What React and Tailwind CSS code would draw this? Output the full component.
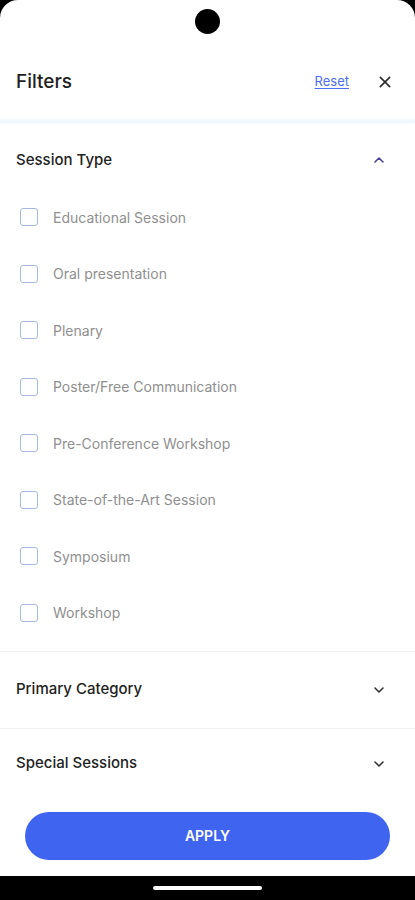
import React from 'react';

const sessionTypes = [
    'Educational Session',
    'Oral presentation',
    'Plenary',
    'Poster/Free Communication',
    'Pre-Conference Workshop',
    'State-of-the-Art Session',
    'Symposium',
    'Workshop',
];

const Chevron = ({ up, className }) => (
    <svg width="16" height="16" viewBox="0 0 24 24" fill="none" stroke="currentColor" strokeWidth="2.4" strokeLinecap="round" strokeLinejoin="round" className={className}>
        {up ? <path d="M6 15l6-6 6 6" /> : <path d="M6 9l6 6 6-6" />}
    </svg>
);

const App = () => {
    return (
        <div className="w-[415px] h-[900px] bg-black flex flex-col overflow-hidden" style={{ fontFamily: 'Inter, "Noto Sans", sans-serif' }}>
            <div className="flex-1 bg-white rounded-t-[18px] flex flex-col">
                {/* status bar */}
                <div className="h-[46px] flex justify-center pt-[9px]">
                    <div className="w-[25px] h-[25px] rounded-full bg-black"></div>
                </div>

                {/* header */}
                <div className="h-[72px] flex items-center pl-[16px] pr-[22px]">
                    <h1 className="text-[19px] font-medium text-[#1f1f1f] flex-1">Filters</h1>
                    <button className="text-[13px] text-[#4d6ef0] underline underline-offset-2 mr-[28px]">Reset</button>
                    <svg width="16" height="16" viewBox="0 0 24 24" fill="none" stroke="#2a2a2a" strokeWidth="2.4" strokeLinecap="round">
                        <path d="M5 5l14 14M19 5L5 19" />
                    </svg>
                </div>
                <div className="h-[7px] bg-gradient-to-b from-white via-[#eef5fb] to-white"></div>

                {/* Session Type */}
                <div className="h-[70px] flex items-center pl-[16px] pr-[28px]">
                    <span className="flex-1 text-[15px] font-medium text-[#222]">Session Type</span>
                    <Chevron up className="text-[#46409a]" />
                </div>
                <div className="flex flex-col gap-[12.5px] pb-[16px]">
                    {sessionTypes.map((t) => (
                        <label key={t} className="h-[44px] flex items-center pl-[20px]">
                            <span className="w-[18px] h-[18px] border-[1.5px] border-[#a9b9dc] rounded-[3px] mr-[15px]"></span>
                            <span className="text-[14px] text-[#8f8f8f]">{t}</span>
                        </label>
                    ))}
                </div>

                <div className="border-t border-[#f2f2f2] h-[77px] flex items-center pl-[16px] pr-[28px]">
                    <span className="flex-1 text-[15px] font-medium text-[#222]">Primary Category</span>
                    <Chevron className="text-[#333]" />
                </div>
                <div className="border-t border-[#f2f2f2] h-[71px] flex items-center pl-[16px] pr-[28px]">
                    <span className="flex-1 text-[15px] font-medium text-[#222]">Special Sessions</span>
                    <Chevron className="text-[#333]" />
                </div>

                <div className="px-[25px] pt-[13px]">
                    <button className="w-full h-[48px] rounded-full bg-[#3f65f0] text-white text-[14px] font-semibold">APPLY</button>
                </div>
            </div>

            {/* nav bar */}
            <div className="h-[24px] bg-black flex justify-center pt-[10px]">
                <div className="w-[109px] h-[4px] rounded-full bg-white"></div>
            </div>
        </div>
    );
};

export default App;
